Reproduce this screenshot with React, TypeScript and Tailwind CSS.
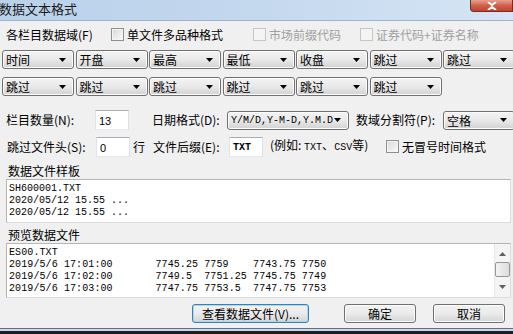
import React from 'react'

const cjk = "font-['Noto_Sans_CJK_SC','Liberation_Sans',sans-serif]"
const mono = "font-['Liberation_Mono',monospace]"

function Arrow() {
  return (
    <svg width="7" height="4" viewBox="0 0 7 4" className="shrink-0">
      <path d="M0 0h7L3.5 4z" fill="#000" />
    </svg>
  )
}

function Combo({ text, w, isMono }: { text: string; w: string; isMono?: boolean }) {
  return (
    <div
      className={`${w} h-[19px] shrink-0 flex items-center rounded-[3px] border border-[#707070] bg-linear-to-b from-[#f3f3f3] via-[#e9e9e9] to-[#d2d2d2] shadow-[inset_0_0_0_1px_#fcfcfc] pl-[3px] pr-[7px] overflow-hidden`}
    >
      <span className={`flex-1 min-w-0 overflow-hidden whitespace-nowrap leading-[17px] ${isMono ? `${mono} text-[10px]` : 'text-[12px]'}`}>
        {text}
      </span>
      <Arrow />
    </div>
  )
}

function Check({ disabled }: { disabled?: boolean }) {
  return (
    <span
      className={`w-[13px] h-[13px] shrink-0 border ${
        disabled
          ? 'border-[#c5c5c5] bg-[#f4f4f4]'
          : 'border-[#8e8f8f] bg-linear-to-br from-[#d8d8d8] to-[#fbfbfb] shadow-[inset_0_0_0_1px_#f4f4f4]'
      }`}
    />
  )
}

function Input({ value, w, isMono }: { value: string; w: string; isMono?: boolean }) {
  return (
    <div
      className={`${w} h-[20px] shrink-0 bg-white border border-[#abadb3] border-l-[#e2e3ea] border-r-[#dbdfe6] border-b-[#e3e9ef] flex items-start pl-[3px] pt-[2px]`}
    >
      <span className={isMono ? `${mono} text-[10px] font-bold` : "font-['Liberation_Sans',sans-serif] text-[11px]"}>{value}</span>
    </div>
  )
}

function Btn({ label, w, focused }: { label: string; w: string; focused?: boolean }) {
  return (
    <div
      className={`${w} h-[19px] shrink-0 flex items-center justify-center rounded-[3px] border ${
        focused ? 'border-[#3c7fb1] shadow-[inset_0_0_0_1px_#a6d9f4]' : 'border-[#707070] shadow-[inset_0_0_0_1px_#fcfcfc]'
      } bg-linear-to-b from-[#f2f2f2] via-[#ebebeb] to-[#d4d4d4] text-[12px] leading-[17px]`}
    >
      {label}
    </div>
  )
}

const row1 = ['时间', '开盘', '最高', '最低', '收盘', '跳过', '跳过']
const row2 = ['跳过', '跳过', '跳过', '跳过', '跳过', '跳过']

const preview = [
  'ES00.TXT',
  '2019/5/6 17:01:00       7745.25 7759    7743.75 7750',
  '2019/5/6 17:02:00       7749.5  7751.25 7745.75 7749',
  '2019/5/6 17:03:00       7747.75 7753.5  7747.75 7753',
]

export default function App() {
  return (
    <div className={`w-[513px] h-[334px] overflow-hidden flex flex-col bg-[#f0f0f0] text-black ${cjk}`}>
      {/* title bar */}
      <div className="h-[21px] shrink-0 flex items-start bg-linear-to-r from-[#b9d1ea] via-[#c4d8ee] to-[#d6e5f5] border-b border-[#9fb3c8]">
        <span className="text-[13px] leading-[16px] mt-[1px] -ml-[1px] text-[#1b1b1b]">数据文本格式</span>
        <div className="ml-auto w-[43px] h-[12px] rounded-bl-[4px] border border-t-0 border-[#7a2a20] bg-linear-to-b from-[#e6a08f] via-[#d0604c] to-[#c0432f] flex items-center justify-center">
          <svg width="10" height="8" viewBox="0 0 10 8">
            <path d="M1 0l4 3 4-3M1 8l4-3 4 3" stroke="#fff" strokeWidth="2" fill="none" />
          </svg>
        </div>
      </div>

      {/* options row */}
      <div className="mt-[7px] h-[13px] flex items-center text-[12px] leading-[13px]">
        <span className="w-[111px] pl-[6px] shrink-0">各栏目数据域(F)</span>
        <div className="w-[142px] flex items-center gap-[3px] shrink-0">
          <Check />
          <span>单文件多品种格式</span>
        </div>
        <div className="w-[107px] flex items-center gap-[3px] shrink-0 text-[#a0a0a0]">
          <Check disabled />
          <span>市场前缀代码</span>
        </div>
        <div className="flex items-center gap-[3px] text-[#a0a0a0]">
          <Check disabled />
          <span>证券代码+证券名称</span>
        </div>
      </div>

      {/* field combos */}
      <div className="mt-[9px] flex gap-[1.5px] pl-[2px]">
        {row1.map((t, i) => (
          <Combo key={i} text={t} w="w-[72px]" />
        ))}
      </div>
      <div className="mt-[8px] flex gap-[1.5px] pl-[2px]">
        {row2.map((t, i) => (
          <Combo key={i} text={t} w="w-[72px]" />
        ))}
      </div>

      {/* counts / date */}
      <div className="mt-[14px] h-[20px] flex items-center text-[12px] leading-[16px]">
        <span className="w-[95px] pl-[6px] shrink-0">栏目数量(N):</span>
        <Input value="13" w="w-[34px]" />
        <span className="ml-[23px] w-[75px] shrink-0">日期格式(D):</span>
        <Combo text="Y/M/D,Y-M-D,Y.M.D" w="w-[122px]" isMono />
        <span className="ml-[7px] w-[87px] shrink-0">数域分割符(P):</span>
        <Combo text="空格" w="w-[72px]" />
      </div>

      <div className="mt-[6px] h-[21px] flex items-center text-[12px] leading-[16px]">
        <span className="w-[96px] pl-[7px] shrink-0">跳过文件头(S):</span>
        <Input value="0" w="w-[34px]" />
        <span className="ml-[3px] w-[20px] shrink-0">行</span>
        <span className="w-[76px] shrink-0">文件后缀(E):</span>
        <Input value="TXT" w="w-[34px]" isMono />
        <span className="ml-[7px] w-[116px] shrink-0">
          (例如: <span className={`${mono} text-[10px]`}>TXT</span>、<span className={`${mono} text-[10px]`}>CSV</span>等)
        </span>
        <Check />
        <span className="ml-[3px]">无冒号时间格式</span>
      </div>

      {/* sample */}
      <div className="mt-[6px] h-[15px] pl-[8px] text-[12px] leading-[15px]">数据文件样板</div>
      <div className={`ml-[6px] mr-[2px] mt-[1px] h-[44px] bg-white border border-[#b5b5b5] border-b-[#dcdcdc] border-r-[#dcdcdc] pl-[2px] pt-[3px] ${mono} text-[10px] leading-[12px] whitespace-pre`}>
        {'SH600001.TXT\n2020/05/12 15.55 ...\n2020/05/12 15.55 ...'}
      </div>

      {/* preview */}
      <div className="mt-[4px] h-[15px] pl-[8px] text-[12px] leading-[15px]">预览数据文件</div>
      <div className="ml-[6px] mr-[2px] mt-[1px] h-[55px] flex bg-white border border-[#b5b5b5] border-b-[#dcdcdc] border-r-[#dcdcdc]">
        <div className={`flex-1 pl-[2px] pt-[3px] ${mono} text-[10px] leading-[12px] tracking-[0.1px] whitespace-pre overflow-hidden`}>
          {preview.join('\n')}
        </div>
        <div className="w-[16px] shrink-0 flex flex-col items-center bg-[#f4f4f4] border-l border-[#e6e6e6]">
          <svg width="7" height="4" viewBox="0 0 7 4" className="mt-[8px]">
            <path d="M0 4h7L3.5 0z" fill="#606060" />
          </svg>
          <div className="mt-[6px] w-[15px] h-[15px] rounded-[2px] border border-[#979797] bg-linear-to-r from-[#f3f3f3] to-[#dcdcdc]" />
          <svg width="7" height="4" viewBox="0 0 7 4" className="mt-auto mb-[8px]">
            <path d="M0 0h7L3.5 4z" fill="#606060" />
          </svg>
        </div>
      </div>

      {/* buttons */}
      <div className="mt-[6px] flex">
        <div className="ml-[192px]">
          <Btn label="查看数据文件(V)..." w="w-[117px]" focused />
        </div>
        <div className="ml-[35px]">
          <Btn label="确定" w="w-[72px]" />
        </div>
        <div className="ml-[17px]">
          <Btn label="取消" w="w-[72px]" />
        </div>
      </div>

      <div className="flex-1" />
      <div className="h-[1px] bg-[#5a6e84]" />
      <div className="h-[2px] bg-[#c8d8ea]" />
      <div className="h-[3px] bg-[#1f1f1f]" />
    </div>
  )
}
